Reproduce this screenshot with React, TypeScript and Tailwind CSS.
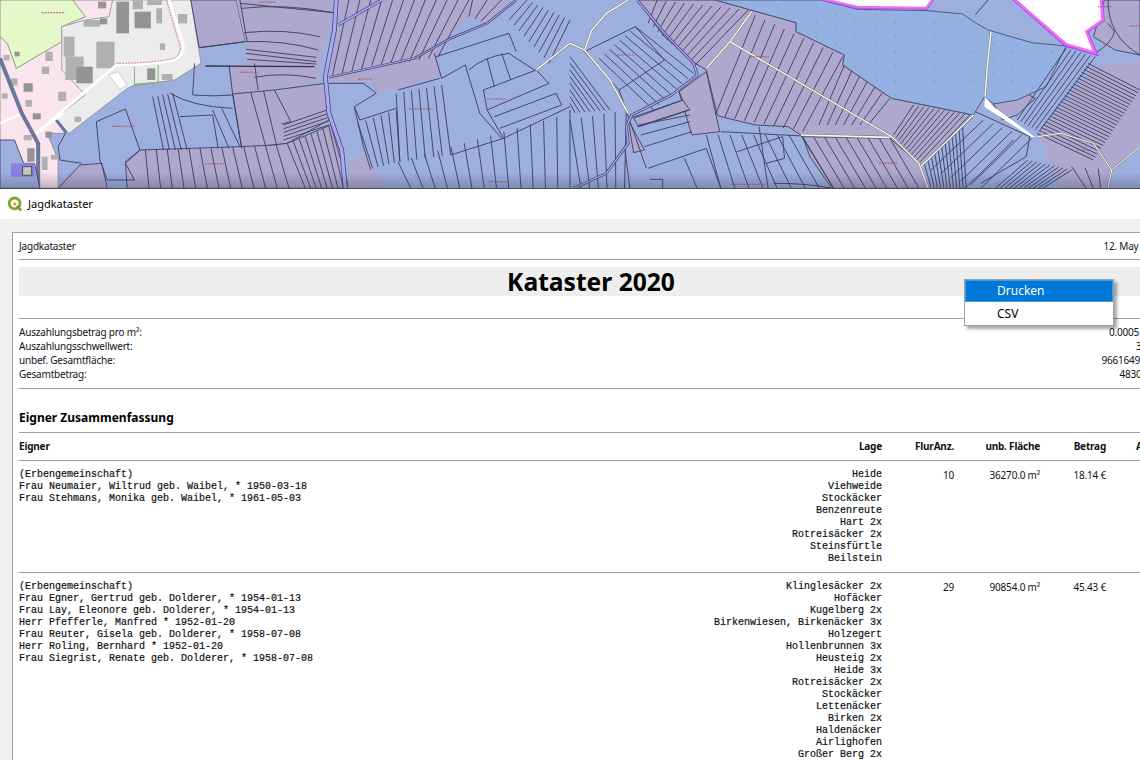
import React from "react";

type P = [number, number];
const pts = (a: number[]) => a.reduce((s, v, i) => s + v + (i % 2 ? " " : ","), "");
const strips = (a1: P, a2: P, b1: P, b2: P, n: number) => {
  const o: string[] = [];
  for (let i = 0; i <= n; i++) {
    const t = i / n;
    o.push(`M${a1[0] + (a2[0] - a1[0]) * t} ${a1[1] + (a2[1] - a1[1]) * t}L${b1[0] + (b2[0] - b1[0]) * t} ${b1[1] + (b2[1] - b1[1]) * t}`);
  }
  return o.join("");
};
const PURPLE = "#aea8cf";
const BLUE = "#9dafdf";
const LINE = "#3d3d5c";

function Road({ d, w = 5 }: { d: string; w?: number }) {
  return (
    <>
      <path d={d} fill="none" stroke="#77776f" strokeWidth={w + 2.5} />
      <path d={d} fill="none" stroke="#fbfaf0" strokeWidth={w} />
    </>
  );
}
function Stream({ d, w = 8 }: { d: string; w?: number }) {
  return (
    <>
      <path d={d} fill="none" stroke="#44446c" strokeWidth={w + 4} />
      <path d={d} fill="none" stroke="#a9a8f4" strokeWidth={w} />
    </>
  );
}
const Poly = ({ a, f, s }: { a: number[]; f: string; s?: string }) => (
  <polygon points={pts(a)} fill={f} stroke={s ?? "none"} strokeWidth={s ? 2.5 : 0} />
);
const Label = ({ x, y, w }: { x: number; y: number; w: number }) => (
  <path d={`M${x} ${y}h${w}`} stroke="#a8505c" strokeWidth={3} strokeDasharray="5 3" />
);

const buildings: number[][] = [
  [270, 5, 22, 20], [405, 0, 40, 15], [365, 0, 28, 28], [370, 35, 45, 50], [490, 42, 25, 28], [430, 25, 16, 45], [320, 5, 35, 95],
  [175, 110, 30, 60], [180, 170, 50, 70], [210, 200, 45, 50], [265, 125, 50, 80], [160, 275, 22, 28], [405, 205, 22, 35], [445, 222, 30, 18],
  [230, 60, 45, 20], [275, 55, 20, 18], [440, 130, 14, 20], [125, 155, 20, 28], [65, 250, 25, 25], [30, 235, 18, 22], [70, 300, 18, 20], [90, 340, 22, 18],
  [115, 200, 20, 22], [10, 165, 16, 16], [40, 155, 14, 14], [5, 280, 16, 16], [65, 405, 22, 16], [75, 445, 20, 40], [115, 470, 16, 40], [140, 465, 18, 14], [125, 395, 18, 18], [205, 350, 18, 16],
];

function MapView() {
  return (
    <svg viewBox="0 0 1140 188" width="1140" height="188" className="block h-[188px] w-[1140px] shrink-0 blur-[0.35px]">
      <defs>
        <pattern id="dots" width="108" height="44" patternUnits="userSpaceOnUse">
          <path d="M30 20v6M84 42v6M84 -4v6" stroke="#3fb795" strokeWidth="3" />
        </pattern>
        <linearGradient id="fade" x1="0" x2="0" y1="0" y2="1">
          <stop offset="0" stopColor="#30304a" stopOpacity="0" />
          <stop offset="1" stopColor="#30304a" stopOpacity="0.28" />
        </linearGradient>
      </defs>
      <rect width="1140" height="188" fill={BLUE} />

      <g transform="scale(0.3635 0.33333)">
        <Poly a={[0, 0, 525, 0, 553, 190, 480, 240, 350, 260, 190, 400, 130, 400, 160, 480, 160, 565, 0, 565]} f="#fae4ee" s="#8a8a8a" />
        <Poly a={[0, 0, 200, 0, 235, 50, 170, 80, 170, 125, 45, 205, 20, 130, 0, 110]} f="#e5f8c9" s="#7d8f6f" />
        <Poly a={[310, 0, 525, 0, 553, 190, 480, 240, 370, 255, 350, 265, 190, 400, 150, 355, 235, 285, 170, 210, 170, 80, 235, 60, 300, 50]} f="#ececec" s="#9a9a9a" />
        {buildings.map((b, i) => (
          <rect key={i} x={b[0]} y={b[1]} width={b[2]} height={b[3]} fill={i % 3 ? "#b0b0b0" : "#949494"} />
        ))}
        <path d="M100 400L320 195Q420 195 480 180Q515 160 500 120L465 0" fill="none" stroke="#fff" strokeWidth="8" />
        <path d="M320 190Q420 190 480 175Q505 155 490 120L458 0" fill="none" stroke="#b54848" strokeWidth="2" strokeDasharray="5 3" />
        <path d="M0 370L60 340M100 400L175 340" stroke="#fff" strokeWidth="7" />
        <path d="M370 200V253L435 247V195" fill="none" stroke="#84b77a" strokeWidth="3" />
        <polygon points="300,225 325,215 350,255 330,268" fill="#fff" stroke="#888" />
        <path d="M0 175L60 340L105 430V565" fill="none" stroke="#697799" strokeWidth="11" />
        <path d="M155 360L182 398" stroke="#6577a5" strokeWidth="9" />
        <Poly a={[0, 420, 40, 420, 65, 490, 95, 490, 110, 565, 0, 565]} f={BLUE} s={LINE} />
        <rect x="30" y="490" width="65" height="40" fill="#8b7fe0" />
        <rect x="62" y="500" width="25" height="26" fill="#c5c5c5" stroke="#555" strokeWidth="3" />

        <Poly a={[160, 565, 220, 495, 280, 490, 295, 565]} f={PURPLE} s={LINE} />
        <Poly a={[525, 0, 650, 0, 675, 125, 548, 143]} f={PURPLE} s={LINE} />
        <Poly a={[650, 0, 920, 0, 870, 250, 710, 270, 640, 282, 630, 195, 680, 190, 675, 125]} f={PURPLE} />
        <Poly a={[640, 282, 755, 270, 895, 250, 905, 360, 790, 430, 665, 445]} f={PURPLE} s={LINE} />
        <Poly a={[345, 485, 385, 450, 660, 440, 755, 435, 790, 430, 910, 375, 960, 565, 350, 565]} f={PURPLE} s={LINE} />
        <Poly a={[918, 0, 1300, 0, 1290, 50, 1240, 110, 1200, 170, 1210, 225, 1100, 265, 1040, 280, 1020, 250, 905, 240]} f={PURPLE} />
        <Poly a={[1290, 0, 1420, 0, 1340, 70, 1290, 50]} f={PURPLE} />
        <Poly a={[958, 490, 1010, 460, 1060, 565, 958, 565]} f={PURPLE} />
        <g fill="none" stroke={LINE} strokeWidth="2.6">
          <path d="M660 10L918 38M665 25Q780 10 918 38M672 98Q780 85 880 110M676 125Q780 120 875 150M677 148L870 172M677 160L870 185M680 178L870 192M700 232Q780 215 870 235M660 0L680 125" />
          <path d="M548 143L675 125M630 195L640 282M700 190L710 270" />
          <path d={strips([960, 0], [1290, 0], [915, 225], [1205, 170], 11)} />
          <path d={strips([1300, 0], [1420, 0], [1290, 50], [1340, 70], 3)} />
          <path d={strips([400, 450], [760, 435], [410, 565], [795, 565], 12)} />
          <path d={strips([790, 430], [905, 380], [840, 565], [945, 565], 7)} />
          <path d={strips([780, 375], [780, 420], [900, 330], [905, 375], 4)} />
          <path d="M690 278L730 435M725 272L760 432M755 270L800 365L775 372M640 282L665 445" />
          <path d={strips([420, 290], [475, 280], [450, 450], [515, 450], 4)} />
          <path d="M265 365L345 327L385 450L345 490L370 540L295 540L275 480ZM468 280Q530 320 640 325M530 285Q590 290 640 285M535 190L530 285M495 350L585 345L600 445M585 330L630 445M610 325L660 440M160 440L165 480L225 490M160 440L180 400" />
          <path d={strips([1090, 280], [1215, 255], [1100, 485], [1240, 465], 6)} />
          <path d={strips([985, 370], [1090, 330], [1025, 505], [1100, 485], 5)} />
          <path d={strips([1095, 485], [1568, 340], [1130, 565], [1568, 565], 13)} />
          <path d="M905 250L1000 250L1035 280L975 320L985 370L1000 440L1020 510M975 320L990 360L1090 325M1095 270L1210 235M1330 270L1475 210L1510 250L1340 330ZM1360 350L1530 280L1545 315L1375 385M1340 330L1385 415M1240 465L1385 415L1568 320M1215 235L1280 195L1320 340L1380 415M1290 210Q1330 170 1400 160L1470 210M1340 175L1360 260M1380 160L1405 240" />
          <path d={strips([1450, 0], [1568, 60], [1400, 60], [1510, 190], 8)} />
          <path d="M1195 160L1215 235M1200 170L1400 100L1420 155" />
        </g>
        <Stream d="M925 0L920 90L895 230L905 340L940 450L950 565" w={9} />
        <Stream d="M930 75L1050 0" w={5} />
        <Stream d="M905 232L1140 175L1240 115L1340 70L1420 0" w={3} />
        <path d="M1000 40L1035 280" stroke="#9f9fe6" strokeWidth="2" fill="none" />
        <path d="M565 198L865 200" stroke="#34344f" strokeWidth="4" />
        <Road d="M1475 210L1568 130" w={4} />
        <Label x={115} y={38} w={65} />
        <Label x={712} y={6} w={45} />
        <Label x={660} y={217} w={52} />
        <Label x={985} y={237} w={40} />
        <Label x={308} y={379} w={62} />
        <Label x={565} y={491} w={52} />
        <Label x={1125} y={327} w={66} />
        <Label x={1340} y={297} w={55} />
        <Label x={1345} y={545} w={50} />
      </g>

      <g transform="translate(570 0) scale(0.3635 0.33333)">
        <Poly a={[185, 0, 400, 0, 622, 68, 622, 95, 755, 165, 750, 195, 885, 295, 1110, 345, 965, 500, 885, 410, 635, 405, 600, 380, 510, 375, 415, 350, 405, 345, 375, 210, 345, 190, 260, 110]} f={PURPLE} s={LINE} />
        <Poly a={[640, 410, 880, 415, 960, 490, 985, 565, 720, 565, 660, 470]} f={PURPLE} s={LINE} />
        <Poly a={[300, 275, 375, 215, 412, 395, 335, 405]} f={PURPLE} s={LINE} />
        <Poly a={[175, 355, 310, 300, 330, 330, 190, 380]} f={PURPLE} s={LINE} />
        <Poly a={[160, 360, 205, 450, 175, 458]} f={PURPLE} s={LINE} />
        <Poly a={[1470, 0, 1568, 0, 1568, 165, 1500, 150, 1440, 110]} f={PURPLE} s={LINE} />
        <Poly a={[1440, 200, 1568, 180, 1568, 330, 1470, 360, 1310, 470, 1290, 400]} f={PURPLE} />
        <Poly a={[1310, 470, 1480, 350, 1568, 330, 1568, 430, 1490, 510, 1480, 565, 1350, 565]} f={PURPLE} />
        <Poly a={[1165, 312, 1255, 280, 1280, 295, 1230, 345, 1190, 360]} f={PURPLE} s={LINE} />

        <Poly a={[400, 0, 690, 0, 790, 28, 985, 32, 1080, 42, 1115, 68, 1150, 90, 1270, 128, 1365, 138, 1310, 260, 1230, 300, 1165, 312, 1140, 290, 1110, 345, 885, 295, 750, 195, 755, 165, 622, 95, 622, 68]} f="#95b1e4" s="#45506e" />
        <polygon points="400,0 690,0 790,28 985,32 1080,42 1115,68 1150,90 1270,128 1365,138 1310,260 1230,300 1165,312 1140,290 1110,345 885,295 750,195 755,165 622,95 622,68" fill="url(#dots)" />

        <g fill="none" stroke={LINE} strokeWidth="2.6">
          <path d={strips([240, 0], [490, 30], [215, 70], [345, 195], 10)} />
          <path d={strips([510, 45], [750, 170], [400, 345], [640, 395], 9)} />
          <path d={strips([755, 195], [880, 295], [685, 375], [820, 375], 6)} />
          <path d={strips([945, 315], [1100, 345], [890, 405], [965, 500], 11)} />
          <path d={strips([640, 410], [880, 415], [725, 565], [960, 565], 8)} />
          <path d={strips([375, 405], [635, 405], [415, 565], [725, 565], 8)} />
          <path d={strips([0, 170], [0, 330], [110, 330], [0, 340], 8)} />
          <path d={strips([0, 360], [155, 330], [30, 565], [150, 565], 5)} />
          <path d={strips([80, 175], [180, 80], [230, 330], [340, 220], 7)} />
          <path d="M40 155L180 80L260 180L135 270ZM135 270L210 505M150 440L165 565M215 505L375 445L415 565M315 475L350 565M220 538H255V565M165 355L310 300L300 275M185 380L325 330M195 405L330 365M205 440L335 395" />
          <path d="M190 375L330 345M1115 45L1150 0M415 395L640 408M460 455L585 410L590 475L540 490M520 380L545 565M560 550Q660 550 720 565" />
          <path d={strips([1110, 350], [1270, 415], [965, 500], [1130, 565], 6)} />
          <path d={strips([965, 500], [1080, 380], [985, 565], [1090, 565], 12)} />
          <path d="M1115 335L1265 410L1255 470L1130 550M1085 565L1130 520L1220 420" />
          <path d={strips([1425, 190], [1285, 400], [1568, 270], [1440, 480], 24)} />
          <path d={strips([1365, 145], [1445, 170], [1230, 360], [1290, 395], 6)} />
          <path d={strips([1260, 480], [1380, 510], [1170, 565], [1300, 565], 10)} />
          <path d={strips([1380, 500], [1490, 510], [1420, 565], [1480, 565], 3)} />
          <path d="M1445 160Q1490 130 1498 95L1480 70M1480 0Q1480 110 1568 165" />
        </g>
        <Stream d="M185 0L260 100L340 190L350 225L280 285L170 345L155 380L160 430L100 520L10 565" w={4} />

        <polygon points="690,-5 790,22 980,25 1000,-5" fill="#fff" stroke="#b05cf0" strokeWidth="10" />
        <polygon points="690,-5 790,20 980,23 1000,-5" fill="#fff" stroke="#f56ef2" strokeWidth="6" />
        <polygon points="1220,-5 1365,135 1445,160 1420,95 1465,60 1460,-5" fill="#fff" stroke="#a555ee" strokeWidth="12" />
        <polygon points="1220,-5 1365,132 1443,157 1420,95 1465,60 1460,-5" fill="#fff" stroke="#f56ef2" strokeWidth="7" />

        <Road d="M160 0L100 40L60 90L40 150" w={4} />
        <Road d="M0 130L40 150L110 240L160 340" w={4} />
        <Road d="M500 35L440 125L375 205" w={4} />
        <Road d="M440 125L885 410L960 490L985 565" w={4} />
        <Road d="M635 405L880 412" w={5} />
        <Road d="M1110 345L965 500" w={4} />
        <Road d="M1158 95L1148 200L1142 290" w={4} />
        <Road d="M1285 410L1350 400L1440 430L1490 510L1480 565M1490 510L1568 440" w={3} />
        <polygon points="1142,290 1165,320 1280,412 1270,412 1140,320" fill="#fff" />
        <Label x={130} y={165} w={45} />
        <Label x={495} y={170} w={52} />
        <Label x={850} y={489} w={52} />
        <Label x={445} y={553} w={100} />
        <Label x={1395} y={450} w={30} />
        <Label x={1452} y={20} w={40} />
        <Label x={1540} y={78} w={30} />
      </g>
      <rect y="172" width="1140" height="16" fill="url(#fade)" />
    </svg>
  );
}

const SANS = "font-['Noto_Sans','Liberation_Sans',sans-serif]";

const Hr = ({ className = "" }: { className?: string }) => <div className={`h-px bg-[#a0a0a0] ${className}`} />;

const summary: [string, string][] = [
  ["Auszahlungsbetrag pro m²:", "0.0005 €/m²"],
  ["Auszahlungsschwellwert:", "3.00 €"],
  ["unbef. Gesamtfläche:", "9661649.0 m²"],
  ["Gesamtbetrag:", "4830.82 €"],
];

const owners = [
  {
    names: ["(Erbengemeinschaft)", "Frau Neumaier, Wiltrud geb. Waibel, * 1950-03-18", "Frau Stehmans, Monika geb. Waibel, * 1961-05-03"],
    lage: ["Heide", "Viehweide", "Stockäcker", "Benzenreute", "Hart 2x", "Rotreisäcker 2x", "Steinsfürtle", "Beilstein"],
    count: "10",
    area: "36270.0 m²",
    amount: "18.14 €",
  },
  {
    names: [
      "(Erbengemeinschaft)",
      "Frau Egner, Gertrud geb. Dolderer, * 1954-01-13",
      "Frau Lay, Eleonore geb. Dolderer, * 1954-01-13",
      "Herr Pfefferle, Manfred * 1952-01-20",
      "Frau Reuter, Gisela geb. Dolderer, * 1958-07-08",
      "Herr Roling, Bernhard * 1952-01-20",
      "Frau Siegrist, Renate geb. Dolderer, * 1958-07-08",
    ],
    lage: [
      "Klinglesäcker 2x", "Hofäcker", "Kugelberg 2x", "Birkenwiesen, Birkenäcker 3x", "Holzegert", "Hollenbrunnen 3x", "Heusteig 2x", "Heide 3x",
      "Rotreisäcker 2x", "Stockäcker", "Lettenäcker", "Birken 2x", "Haldenäcker", "Airlighofen", "Großer Berg 2x",
    ],
    count: "29",
    area: "90854.0 m²",
    amount: "45.43 €",
  },
];

const COLS = "grid grid-cols-[1fr_72px_86px_66px_57px]";
const MONO = "font-['Liberation_Mono','Courier_New',monospace] text-[10px] leading-[12px] tracking-normal text-[#111] [-webkit-text-stroke:0.2px_#111] whitespace-pre";

function QgisIcon() {
  return (
    <svg viewBox="0 0 16 16" width="16" height="16" className="shrink-0">
      <circle cx="7.6" cy="7.4" r="5.4" fill="none" stroke="#7fa82f" strokeWidth="2.8" />
      <path d="M10 10l4 4.4" stroke="#6f9a28" strokeWidth="2.6" />
      <circle cx="7.8" cy="8" r="1.7" fill="#ef9a3a" />
    </svg>
  );
}

export default function App() {
  return (
    <div className={`relative flex h-[760px] w-[1140px] flex-col overflow-hidden bg-white text-[#111] ${SANS}`}>
      <MapView />
      <div className="h-px shrink-0 bg-[#4a4a5a]" />
      <div className="flex h-[30px] shrink-0 items-center gap-[5px] bg-white pl-[7px] text-[11px] text-black">
        <QgisIcon />
        <span>Jagdkataster</span>
      </div>
      <div className="flex min-h-0 flex-1 flex-col bg-[#f0f0f0] pl-3 pt-[13px]">
        <div className="w-[1158px] flex-1 border border-[#a0a0a0] bg-white px-[6px] text-[10px] tracking-[-0.2px]">
          <div className="flex h-[26px] items-center justify-between">
            <span>Jagdkataster</span>
            <span>12. May 2020</span>
          </div>
          <Hr />
          <div className="mt-[7px] flex h-[29px] items-center justify-center bg-[#eeeeee] pt-px text-[24.6px] font-bold leading-none tracking-normal text-black">
            Kataster 2020
          </div>
          <Hr className="mt-[22px]" />
          <div className="pb-[7px] pt-[6px]">
            {summary.map(([k, v]) => (
              <div key={k} className="flex h-[14px] items-center justify-between leading-[14px]">
                <span>{k}</span>
                <span>{v}</span>
              </div>
            ))}
          </div>
          <Hr />
          <div className="flex h-[43px] items-end pb-[6px] text-[12px] font-bold leading-[16px] tracking-normal text-black">Eigner Zusammenfassung</div>
          <Hr />
          <div className={`${COLS} h-[27px] items-center text-right font-bold`}>
            <div className="flex justify-between">
              <span>Eigner</span>
              <span>Lage</span>
            </div>
            <span>FlurAnz.</span>
            <span>unb. Fläche</span>
            <span>Betrag</span>
            <span className="pl-[30px] text-left">Anz.</span>
          </div>
          <Hr />
          {owners.map((o, i) => (
            <React.Fragment key={i}>
              <div className={`${COLS} pb-[7px] pt-[8px] text-right`}>
                <div className="flex justify-between">
                  <div className={`text-left ${MONO}`}>
                    {o.names.map((n) => (
                      <div key={n}>{n}</div>
                    ))}
                  </div>
                  <div className={MONO}>
                    {o.lage.map((l) => (
                      <div key={l}>{l}</div>
                    ))}
                  </div>
                </div>
                <span className="-mt-px">{o.count}</span>
                <span className="-mt-px">{o.area}</span>
                <span className="-mt-px">{o.amount}</span>
                <span />
              </div>
              <Hr />
            </React.Fragment>
          ))}
        </div>
      </div>
      <div className="absolute left-[964px] top-[279px] w-[150px] border border-[#a0a0a0] bg-white text-[12px] text-black shadow-[3px_3px_3px_rgba(0,0,0,0.35)]">
        <div className="flex h-[22px] items-center border border-[#3d9be8] bg-[#0078d7] pl-[31px] text-white">Drucken</div>
        <div className="flex h-[23px] items-center pl-[32px]">CSV</div>
      </div>
    </div>
  );
}
